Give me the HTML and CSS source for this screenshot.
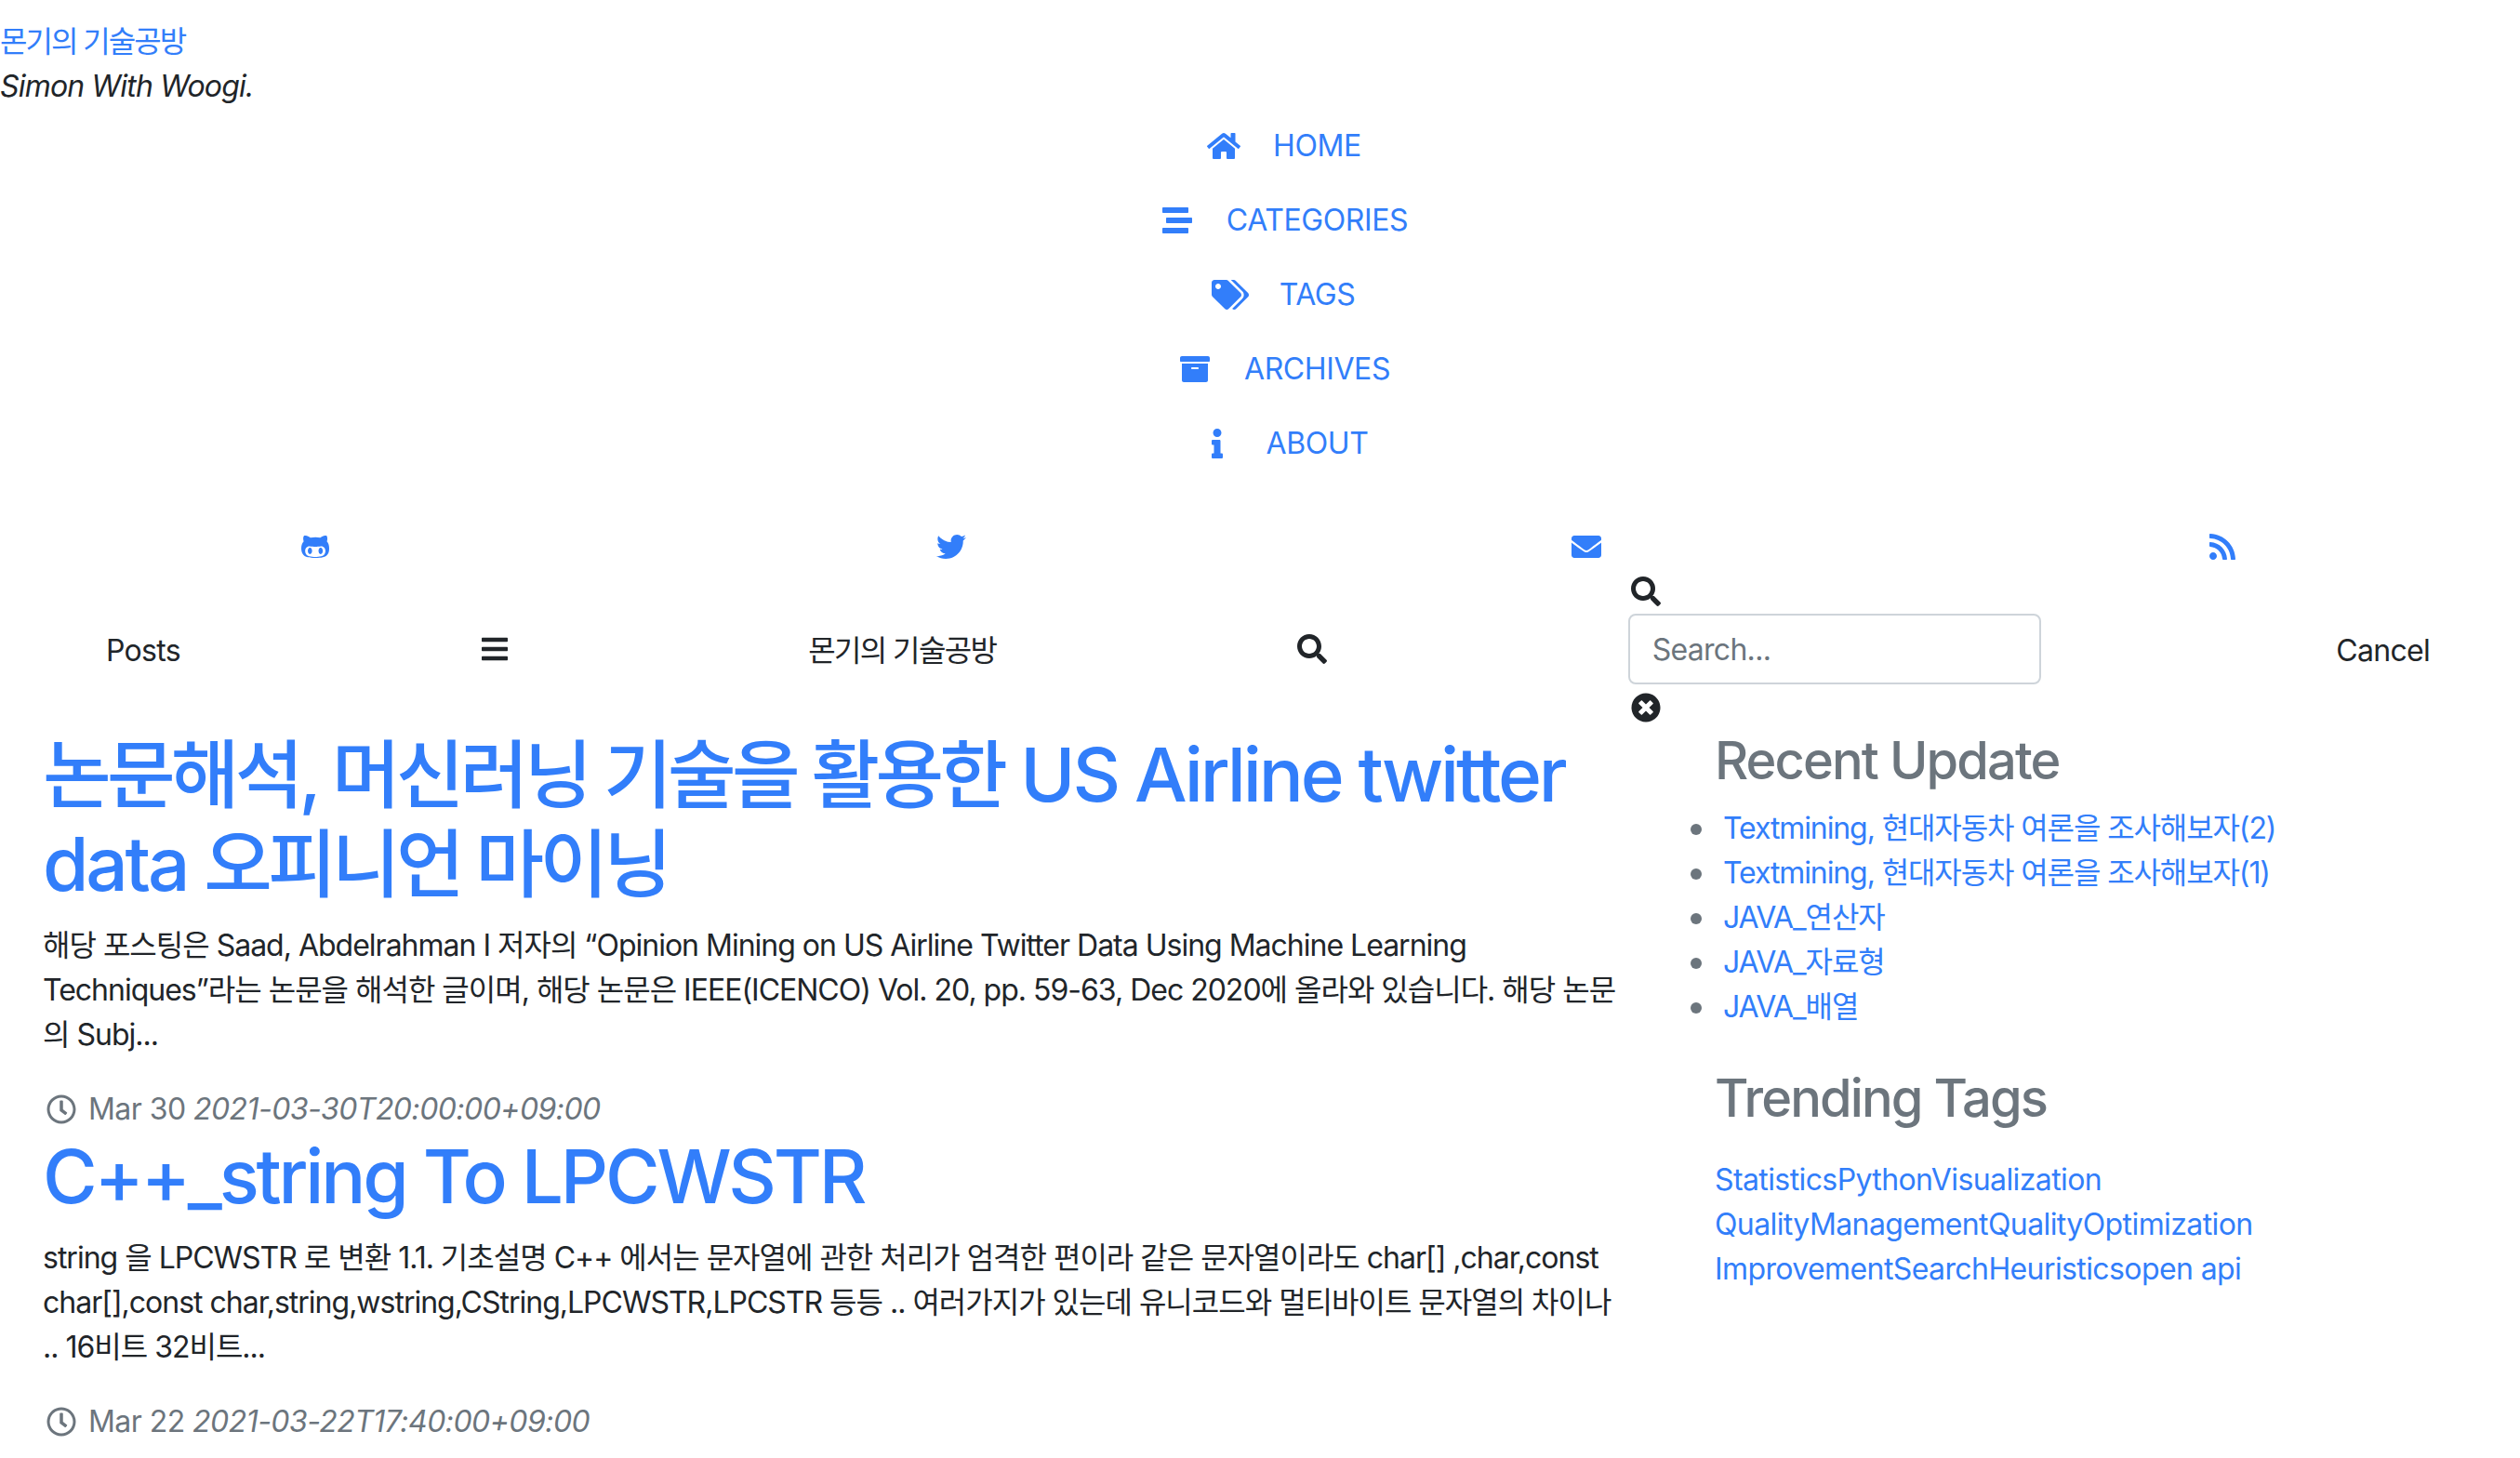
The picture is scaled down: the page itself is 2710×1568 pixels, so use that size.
FILE: index.html
```html
<!DOCTYPE html>
<html lang="ko">
  <head>
    <meta charset="utf-8">
    <title>몬기의 기술공방</title>
    <link rel="stylesheet" href="styles.css">
  </head>
  <body>
    <header class="site-head">
      <a class="site-title" href="#">몬기의 기술공방</a>
      <div class="site-subtitle">Simon With Woogi.</div>
    </header>

    <ul class="nav-list">
      <li><a href="#"><svg class="nav-icon" viewBox="0 0 576 512"><path d="M280.37 148.26L96 300.11V464a16 16 0 0 0 16 16l112.06-.29a16 16 0 0 0 15.92-16V368a16 16 0 0 1 16-16h64a16 16 0 0 1 16 16v95.64a16 16 0 0 0 16 16.05L464 480a16 16 0 0 0 16-16V300L295.67 148.26a12.19 12.19 0 0 0-15.3 0zM571.6 251.47L488 182.56V44.05a12 12 0 0 0-12-12h-56a12 12 0 0 0-12 12v72.61L318.47 43a48 48 0 0 0-61 0L4.34 251.47a12 12 0 0 0-1.6 16.9l25.5 31A12 12 0 0 0 45.15 301l235.22-193.74a12.19 12.19 0 0 1 15.3 0L530.9 301a12 12 0 0 0 16.9-1.6l25.5-31a12 12 0 0 0-1.7-16.93z"/></svg>HOME</a></li>
      <li><a href="#"><svg class="nav-icon" viewBox="0 0 512 512"><path d="M16 128h416c8.84 0 16-7.16 16-16V48c0-8.84-7.16-16-16-16H16C7.16 32 0 39.16 0 48v64c0 8.84 7.16 16 16 16zm480 80H80c-8.84 0-16 7.16-16 16v64c0 8.84 7.16 16 16 16h416c8.84 0 16-7.16 16-16v-64c0-8.84-7.16-16-16-16zm-64 176H16c-8.84 0-16 7.16-16 16v64c0 8.84 7.16 16 16 16h416c8.84 0 16-7.16 16-16v-64c0-8.84-7.16-16-16-16z"/></svg>CATEGORIES</a></li>
      <li><a href="#"><svg class="nav-icon" viewBox="0 0 640 512"><path d="M497.941 225.941L286.059 14.059A48 48 0 0 0 252.118 0H48C21.49 0 0 21.49 0 48v204.118a48 48 0 0 0 14.059 33.941l211.882 211.882c18.744 18.745 49.136 18.746 67.882 0l204.118-204.118c18.745-18.745 18.745-49.137 0-67.882zM112 160c-26.51 0-48-21.49-48-48s21.49-48 48-48 48 21.49 48 48-21.49 48-48 48zm513.941 133.823L421.823 497.941c-18.745 18.745-49.137 18.745-67.882 0l-.36-.36L527.64 323.522c16.999-16.999 26.36-39.6 26.36-63.64s-9.362-46.641-26.36-63.64L331.397 0h48.721a48 48 0 0 1 33.941 14.059l211.882 211.882c18.745 18.745 18.745 49.137 0 67.882z"/></svg>TAGS</a></li>
      <li><a href="#"><svg class="nav-icon" viewBox="0 0 512 512"><path d="M32 448c0 17.7 14.3 32 32 32h384c17.7 0 32-14.3 32-32V160H32v288zm160-212c0-6.6 5.4-12 12-12h104c6.6 0 12 5.4 12 12v8c0 6.6-5.4 12-12 12H204c-6.6 0-12-5.4-12-12v-8zM480 32H32C14.3 32 0 46.3 0 64v48c0 8.8 7.2 16 16 16h480c8.8 0 16-7.2 16-16V64c0-17.7-14.3-32-32-32z"/></svg>ARCHIVES</a></li>
      <li><a href="#"><svg class="nav-icon" viewBox="0 0 192 512"><path d="M20 424.229h20V279.771H20c-11.046 0-20-8.954-20-20V212c0-11.046 8.954-20 20-20h112c11.046 0 20 8.954 20 20v212.229h20c11.046 0 20 8.954 20 20V492c0 11.046-8.954 20-20 20H20c-11.046 0-20-8.954-20-20v-47.771c0-11.046 8.954-20 20-20zM96 0C56.235 0 24 32.235 24 72s32.235 72 72 72 72-32.235 72-72S135.764 0 96 0z"/></svg>ABOUT</a></li>
    </ul>

    <div class="social-row">
      <a href="#"><svg class="icon" viewBox="0 0 480 512"><path d="M186.1 328.7c0 20.9-10.9 55.1-36.7 55.1s-36.7-34.2-36.7-55.1 10.9-55.1 36.7-55.1 36.7 34.2 36.7 55.1zM480 278.2c0 31.9-3.2 65.7-17.5 95-37.9 76.6-142.1 74.8-216.7 74.8-75.8 0-186.2 2.7-225.6-74.8-14.6-29-20.2-63.1-20.2-95 0-41.9 13.9-81.5 41.5-113.6-5.2-15.8-7.7-32.4-7.7-48.8 0-21.5 4.9-32.3 14.6-51.8 45.3 0 74.3 9 108.8 36 29-6.9 58.8-10 88.7-10 27 0 54.2 2.9 80.4 9.2 34-26.7 63-35.2 107.8-35.2 9.8 19.5 14.6 30.3 14.6 51.8 0 16.4-2.6 32.7-7.7 48.2 27.5 32.4 39 72.3 39 114.2zm-64.3 50.5c0-43.9-26.7-82.6-73.5-82.6-18.9 0-37 3.4-56 6-14.9 2.3-29.8 3.2-45.1 3.2-15.2 0-30.1-.9-45.1-3.2-18.7-2.6-37-6-56-6-46.8 0-73.5 38.7-73.5 82.6 0 87.8 80.4 101.3 150.4 101.3h48.2c70.3 0 150.6-13.4 150.6-101.3zm-82.6-55.1c-25.8 0-36.7 34.2-36.7 55.1s10.9 55.1 36.7 55.1 36.7-34.2 36.7-55.1-10.9-55.1-36.7-55.1z"/></svg></a>
      <a href="#"><svg class="icon" viewBox="0 0 512 512"><path d="M459.37 151.716c.325 4.548.325 9.097.325 13.645 0 138.72-105.583 298.558-298.558 298.558-59.452 0-114.68-17.219-161.137-47.106 8.447.974 16.568 1.299 25.34 1.299 49.055 0 94.213-16.568 130.274-44.832-46.132-.975-84.792-31.188-98.112-72.772 6.498.974 12.995 1.624 19.818 1.624 9.421 0 18.843-1.3 27.614-3.573-48.081-9.747-84.143-51.98-84.143-102.985v-1.299c13.969 7.797 30.214 12.67 47.431 13.319-28.264-18.843-46.781-51.005-46.781-87.391 0-19.492 5.197-37.36 14.294-52.954 51.655 63.675 129.3 105.258 216.365 109.807-1.624-7.797-2.599-15.918-2.599-24.04 0-57.828 46.782-104.934 104.934-104.934 30.213 0 57.502 12.67 76.67 33.137 23.715-4.548 46.456-13.32 66.599-25.34-7.798 24.366-24.366 44.833-46.132 57.827 21.117-2.273 41.584-8.122 60.426-16.243-14.292 20.791-32.161 39.308-52.628 54.253z"/></svg></a>
      <a href="#"><svg class="icon" viewBox="0 0 512 512"><path d="M502.3 190.8c3.9-3.1 9.7-.2 9.7 4.7V400c0 26.5-21.5 48-48 48H48c-26.5 0-48-21.5-48-48V195.6c0-5 5.7-7.8 9.7-4.7 22.4 17.4 52.1 39.5 154.1 113.6 21.1 15.4 56.7 47.8 92.2 47.6 35.7.3 72-32.8 92.3-47.6 102-74.1 131.6-96.3 154-113.7zM256 320c23.2.4 56.6-29.2 73.4-41.4 132.7-96.3 142.8-104.7 173.4-128.7 5.8-4.5 9.2-11.5 9.2-18.9v-19c0-26.5-21.5-48-48-48H48C21.5 64 0 85.5 0 112v19c0 7.4 3.4 14.3 9.2 18.9 30.6 23.9 40.7 32.4 173.4 128.7 16.8 12.2 50.2 41.8 73.4 41.4z"/></svg></a>
      <a href="#"><svg class="icon" viewBox="0 0 448 512"><path d="M128.081 415.959c0 35.369-28.672 64.041-64.041 64.041S0 451.328 0 415.959s28.672-64.041 64.041-64.041 64.04 28.673 64.04 64.041zm175.66 47.25c-8.354-154.6-132.185-278.587-286.95-286.95C7.656 175.765 0 183.105 0 192.253v48.069c0 8.415 6.49 15.472 14.887 16.018 111.832 7.284 201.473 96.702 208.772 208.772.547 8.397 7.604 14.887 16.018 14.887h48.069c9.149.001 16.489-7.655 15.995-16.79zm144.249.288C439.596 229.677 251.465 40.445 16.503 32.01 7.473 31.686 0 38.981 0 48.016v48.068c0 8.625 6.835 15.645 15.453 15.999 191.179 7.839 344.627 161.316 352.465 352.465.353 8.618 7.373 15.453 15.999 15.453h48.068c9.034-.001 16.329-7.474 16.005-16.504z"/></svg></a>
    </div>

    <div class="topbar">
      <span class="bar-posts">Posts</span>
      <svg class="icon" viewBox="0 0 448 512"><path d="M16 132h416c8.837 0 16-7.163 16-16V76c0-8.837-7.163-16-16-16H16C7.163 60 0 67.163 0 76v40c0 8.837 7.163 16 16 16zm0 160h416c8.837 0 16-7.163 16-16v-40c0-8.837-7.163-16-16-16H16c-8.837 0-16 7.163-16 16v40c0 8.837 7.163 16 16 16zm0 160h416c8.837 0 16-7.163 16-16v-40c0-8.837-7.163-16-16-16H16c-8.837 0-16 7.163-16 16v40c0 8.837 7.163 16 16 16z"/></svg>
      <span class="bar-title">몬기의 기술공방</span>
      <svg class="icon" viewBox="0 0 512 512"><path d="M505 442.7L405.3 343c-4.5-4.5-10.6-7-17-7H372c27.6-35.3 44-79.7 44-128C416 93.1 322.9 0 208 0S0 93.1 0 208s93.1 208 208 208c48.3 0 92.7-16.4 128-44v16.3c0 6.4 2.5 12.5 7 17l99.7 99.7c9.4 9.4 24.6 9.4 33.9 0l28.3-28.3c9.4-9.4 9.4-24.6.1-34zM208 336c-70.7 0-128-57.2-128-128 0-70.7 57.2-128 128-128 70.7 0 128 57.2 128 128 0 70.7-57.2 128-128 128z"/></svg>
      <div class="search-box">
        <div class="search-icon-line"><svg class="icon" viewBox="0 0 512 512"><path d="M505 442.7L405.3 343c-4.5-4.5-10.6-7-17-7H372c27.6-35.3 44-79.7 44-128C416 93.1 322.9 0 208 0S0 93.1 0 208s93.1 208 208 208c48.3 0 92.7-16.4 128-44v16.3c0 6.4 2.5 12.5 7 17l99.7 99.7c9.4 9.4 24.6 9.4 33.9 0l28.3-28.3c9.4-9.4 9.4-24.6.1-34zM208 336c-70.7 0-128-57.2-128-128 0-70.7 57.2-128 128-128 70.7 0 128 57.2 128 128 0 70.7-57.2 128-128 128z"/></svg></div>
        <input class="search-input" type="text" placeholder="Search...">
        <div class="search-icon-line"><svg class="icon" viewBox="0 0 512 512"><path d="M256 8C119 8 8 119 8 256s111 248 248 248 248-111 248-248S393 8 256 8zm121.6 313.1c4.7 4.7 4.7 12.3 0 17L338 377.6c-4.7 4.7-12.3 4.7-17 0L256 312l-65.1 65.6c-4.7 4.7-12.3 4.7-17 0L134.4 338c-4.7-4.7-4.7-12.3 0-17l65.6-65-65.6-65.1c-4.7-4.7-4.7-12.3 0-17l39.6-39.6c4.7-4.7 12.3-4.7 17 0l65 65.7 65.1-65.6c4.7-4.7 12.3-4.7 17 0l39.6 39.6c4.7 4.7 4.7 12.3 0 17L312 256l65.6 65.1z"/></svg></div>
      </div>
      <span class="bar-cancel">Cancel</span>
    </div>

    <div class="content">
      <main class="posts">
        <article class="post">
          <h1><a href="#"><span class="ko">논문해석, 머신러닝 기술을 활용한</span> US Airline twitter<br>data <span class="ko">오피니언 마이닝</span></a></h1>
          <p>해당 포스팅은 Saad, Abdelrahman I 저자의 “Opinion Mining on US Airline Twitter Data Using Machine Learning Techniques”라는 논문을 해석한 글이며, 해당 논문은 IEEE(ICENCO) Vol. 20, pp. 59-63, Dec 2020에 올라와 있습니다. 해당 논문의 Subj...</p>
          <div class="post-date"><svg class="clock" viewBox="0 0 512 512"><path d="M256 8C119 8 8 119 8 256s111 248 248 248 248-111 248-248S393 8 256 8zm0 448c-110.5 0-200-89.5-200-200S145.5 56 256 56s200 89.5 200 200-89.5 200-200 200zm61.8-104.4l-84.9-61.7c-3.1-2.3-4.9-5.9-4.9-9.7V116c0-6.6 5.4-12 12-12h32c6.6 0 12 5.4 12 12v141.7l66.8 48.6c5.4 3.9 6.5 11.4 2.6 16.8L334.6 349c-3.9 5.3-11.4 6.5-16.8 2.6z"/></svg>Mar 30 <em>2021-03-30T20:00:00+09:00</em></div>
        </article>
        <article class="post">
          <h1><a href="#">C++_string To LPCWSTR</a></h1>
          <p>string 을 LPCWSTR 로 변환 1.1. 기초설명 C++ 에서는 문자열에 관한 처리가 엄격한 편이라 같은 문자열이라도 char[] ,char,const char[],const char,string,wstring,CString,LPCWSTR,LPCSTR 등등 .. 여러가지가 있는데 유니코드와 멀티바이트 문자열의 차이나 .. 16비트 32비트...</p>
          <div class="post-date"><svg class="clock" viewBox="0 0 512 512"><path d="M256 8C119 8 8 119 8 256s111 248 248 248 248-111 248-248S393 8 256 8zm0 448c-110.5 0-200-89.5-200-200S145.5 56 256 56s200 89.5 200 200-89.5 200-200 200zm61.8-104.4l-84.9-61.7c-3.1-2.3-4.9-5.9-4.9-9.7V116c0-6.6 5.4-12 12-12h32c6.6 0 12 5.4 12 12v141.7l66.8 48.6c5.4 3.9 6.5 11.4 2.6 16.8L334.6 349c-3.9 5.3-11.4 6.5-16.8 2.6z"/></svg>Mar 22 <em>2021-03-22T17:40:00+09:00</em></div>
        </article>
      </main>

      <aside class="side">
        <h3>Recent Update</h3>
        <ul class="recent-list">
          <li><a href="#">Textmining, 현대자동차 여론을 조사해보자(2)</a></li>
          <li><a href="#">Textmining, 현대자동차 여론을 조사해보자(1)</a></li>
          <li><a href="#">JAVA_연산자</a></li>
          <li><a href="#">JAVA_자료형</a></li>
          <li><a href="#">JAVA_배열</a></li>
        </ul>
        <h3 class="tags-head">Trending Tags</h3>
        <div class="tag-line"><a href="#">Statistics</a><a href="#">Python</a><a href="#">Visualization</a></div>
        <div class="tag-line"><a href="#">QualityManagement</a><a href="#">Quality</a><a href="#">Optimization</a></div>
        <div class="tag-line"><a href="#">Improvement</a><a href="#">Search</a><a href="#">Heuristics</a><a href="#">open api</a></div>
      </aside>
    </div>
  </body>
</html>
```

FILE: styles.css
```css
body {
  margin: 0;
  padding-top: 21px;
  font-family: Inter, "Noto Sans CJK KR", sans-serif;
  font-size: 32px;
  line-height: 48px;
  letter-spacing: -1.1px;
  color: #212529;
  background: #fff;
  overflow: hidden;
}
a {
  color: #327efa;
  text-decoration: none;
}
svg {
  fill: currentColor;
}
.icon {
  display: block;
  height: 32px;
}
.site-title {
  letter-spacing: -2px;
}
.site-subtitle {
  font-style: italic;
  letter-spacing: -0.8px;
}
.nav-list {
  list-style: none;
  margin: 0 0 48px;
  padding: 0 0 0 50px;
  text-align: center;
  letter-spacing: -0.4px;
}
.nav-list a {
  display: block;
  padding: 16px;
}
.nav-icon {
  width: 40px;
  height: 32px;
  margin-right: 33px;
  vertical-align: -5px;
}
.social-row {
  display: flex;
  justify-content: space-between;
  align-items: center;
  height: 46px;
  padding: 0 302px 0 321px;
}
.social-row a {
  display: flex;
  justify-content: center;
  width: 36px;
}
.topbar {
  display: flex;
  justify-content: space-between;
  align-items: center;
  padding: 0 97px 0 114px;
  letter-spacing: -0.7px;
}
.topbar span {
  padding-top: 3px;
}
.bar-title {
  letter-spacing: -1.6px;
}
.search-box {
  width: 444px;
  margin-right: -6px;
}
.search-icon-line {
  display: flex;
  height: 49px;
  align-items: center;
  padding-left: 3px;
}
.search-input {
  display: block;
  box-sizing: border-box;
  width: 100%;
  height: 76px;
  padding: 0 24px;
  border: 2px solid #ced4da;
  border-radius: 8px;
  font: inherit;
  letter-spacing: -0.7px;
  color: #212529;
}
.search-input::placeholder {
  color: #6c757d;
}
.content {
  display: flex;
}
.posts {
  box-sizing: border-box;
  width: 1844px;
  padding: 0 102px 0 46px;
}
.post h1 {
  margin: 0 0 16px;
  font-size: 80px;
  line-height: 96px;
  font-weight: 500;
  letter-spacing: -3.2px;
}
.post h1 .ko {
  letter-spacing: -4.7px;
}
.post p {
  margin: 0 0 32px;
  letter-spacing: -1px;
}
.post-date {
  color: #6c757d;
  letter-spacing: -0.55px;
}
.clock {
  width: 40px;
  height: 32px;
  margin-right: 9px;
  vertical-align: -5px;
}
.side h3 {
  margin: 0 0 15px;
  font-size: 56px;
  line-height: 67px;
  font-weight: 500;
  letter-spacing: -1.9px;
  color: #6c757d;
}
.recent-list {
  margin: 0 0 41px;
  padding-left: 9px;
  list-style: none;
}
.recent-list li {
  position: relative;
}
.recent-list li::before {
  content: "";
  position: absolute;
  left: -35px;
  top: 19px;
  width: 12px;
  height: 12px;
  border-radius: 50%;
  background: #6c757d;
}
.side .tags-head {
  margin-bottom: 30px;
}
.tag-line {
  letter-spacing: -0.6px;
}
```
